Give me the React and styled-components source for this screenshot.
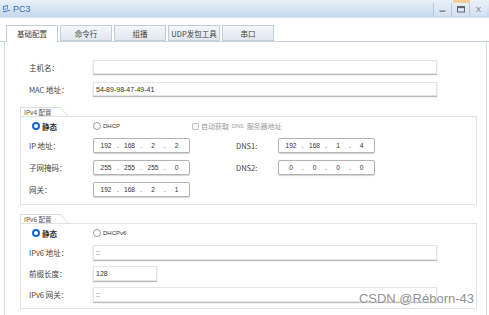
import React from "react"
import styled, { createGlobalStyle } from "styled-components"

const GlobalStyle = createGlobalStyle`
  html, body {
    margin: 0;
    padding: 0;
    background: #fff;
  }
  body {
    font-family: "Noto Sans CJK SC", "Liberation Sans", sans-serif;
  }
`

const Window = styled.div`
  position: relative;
  width: 489px;
  height: 315px;
  overflow: hidden;
  background: #fff;
  color: #333;
  display: flex;
  flex-direction: column;
`

const TitleBar = styled.div`
  height: 17px;
  flex: none;
  display: flex;
  align-items: center;
  padding-left: 2px;
  background: linear-gradient(#eaf1f9, #c4d8ec);
  border-bottom: 1px solid #d6e2ee;
  position: relative;
`

const TitleText = styled.span`
  margin-left: 2px;
  font-family: "Liberation Sans", sans-serif;
  font-size: 9px;
  color: #3b6db5;
`

const Controls = styled.div`
  margin-left: auto;
  margin-right: 2px;
  display: flex;
  height: 13px;
  align-self: flex-end;
  margin-bottom: 1px;
`

const CtrlButton = styled.div`
  width: 17px;
  height: 13px;
  display: flex;
  align-items: center;
  justify-content: center;
  border-left: 1px solid #b7c8da;
  background: linear-gradient(#e6eef7, #d2e1f0);
  font-family: "Liberation Sans", sans-serif;
  font-size: 8px;
  color: #777;
`

const HelpTag = styled.div`
  position: absolute;
  top: 0;
  left: 453px;
  width: 17px;
  height: 3px;
  background: #f6cf98;
`

const TabStrip = styled.div`
  flex: none;
  margin-top: 7px;
  height: 16px;
  display: flex;
  align-items: flex-end;
  gap: 2px;
  padding-left: 6px;
  border-bottom: 1px solid #cad3dc;
`

const Tab = styled.div`
  box-sizing: border-box;
  width: 52px;
  height: ${p => (p.$active ? "17px" : "16px")};
  margin-bottom: ${p => (p.$active ? "-1px" : "0")};
  display: flex;
  align-items: center;
  justify-content: center;
  border: 1px solid #c3cdd8;
  border-bottom: ${p => (p.$active ? "none" : "1px solid #c3cdd8")};
  background: ${p => (p.$active ? "#fff" : "linear-gradient(#f4f7fa, #e0e7ee)")};
  font-size: 7.5px;
  color: #444;
  padding-bottom: ${p => (p.$active ? "1px" : "0")};
`

const Body = styled.div`
  flex: 1;
  margin: 0 2px 0 4px;
  border-left: 1px solid #d6dce2;
  border-right: 1px solid #d6dce2;
  padding: 18px 9px 0 15px;
  display: flex;
  flex-direction: column;
`

const FieldRow = styled.div`
  display: flex;
  align-items: center;
  padding-left: ${p => p.$indent || 0}px;
  height: ${p => p.$h || 14}px;
  margin-top: ${p => p.$mt || 0}px;
`

const Label = styled.span`
  width: ${p => p.$w || 64}px;
  flex: none;
  font-size: 7.5px;
  color: #444;
  white-space: nowrap;
`

const TextBox = styled.div`
  box-sizing: border-box;
  width: ${p => p.$w}px;
  height: ${p => p.$h || 14}px;
  border: 1px solid #e4e4e4;
  box-shadow: 0 1px 1px #bcbcbc;
  background: #fff;
  padding-left: 2px;
  display: flex;
  align-items: center;
  font-family: "Liberation Sans", sans-serif;
  font-size: 7px;
  color: #333;
`

const IpBox = styled.div`
  box-sizing: border-box;
  width: 97px;
  height: 15px;
  border: 1px solid #b4b4b4;
  border-radius: 2px;
  box-shadow: 0 1px 1px rgba(0, 0, 0, 0.18);
  background: #fff;
  padding-left: 3px;
  display: flex;
  align-items: center;
  font-family: "Liberation Sans", sans-serif;
  font-size: 6.6px;
  color: #333;
`

const Octet = styled.span`
  width: 18px;
  text-align: center;
`

const Dot = styled.span`
  width: 5.5px;
  text-align: center;
`

const Group = styled.div`
  margin-top: ${p => p.$mt}px;
  display: flex;
  flex-direction: column;
  align-items: flex-start;
`

const Legend = styled.div`
  position: relative;
  box-sizing: border-box;
  width: 40px;
  height: 9px;
  padding-left: 3px;
  border-top: 1px solid #dcdcdc;
  border-left: 1px solid #dcdcdc;
  font-size: 6.5px;
  line-height: 8px;
  color: #555;
  white-space: nowrap;
  &::after {
    content: "";
    position: absolute;
    top: -1px;
    right: -8px;
    width: 8px;
    height: 9px;
    background: linear-gradient(
      to top right,
      transparent calc(50% - 0.6px),
      #d6d6d6 50%,
      transparent calc(50% + 0.6px)
    );
  }
`

const GroupBox = styled.div`
  box-sizing: border-box;
  width: 457px;
  border: 1px solid #e2e2e2;
  background: #fff;
  padding: ${p => p.$pad};
`

const V4Grid = styled.div`
  display: grid;
  grid-template-columns: 64px 97px 46px 42px 97px;
  grid-template-rows: 10px 15px 15px 15px;
  row-gap: 7px;
  align-items: center;
`

const V6Stack = styled.div`
  display: flex;
  flex-direction: column;
  gap: 6px;
`

const RadioItem = styled.label`
  display: flex;
  align-items: center;
  gap: 2px;
  padding-left: ${p => p.$pl || 0}px;
  font-size: ${p => (p.$latin ? "6px" : "7.5px")};
  font-family: ${p =>
    p.$latin ? '"Liberation Sans", sans-serif' : '"Noto Sans CJK SC", sans-serif'};
  color: #333;
  font-weight: ${p => (p.$bold ? 600 : 400)};
`

const RadioDot = styled.span`
  box-sizing: border-box;
  width: 8px;
  height: 8px;
  border-radius: 50%;
  background: #fff;
  border: ${p => (p.$checked ? "2.5px solid #1466d6" : "1px solid #9c9c9c")};
`

const CheckItem = styled.label`
  grid-column: 3 / 6;
  display: flex;
  align-items: center;
  gap: 2px;
  padding-left: 2px;
  font-size: 7px;
  color: #9a9a9a;
  white-space: nowrap;
`

const CheckBox = styled.span`
  box-sizing: border-box;
  width: 7px;
  height: 7px;
  border: 1px solid #c2c2c2;
  border-radius: 1px;
  background: #fafafa;
`

const Small = styled.span`
  font-family: "Liberation Sans", sans-serif;
  font-size: 5.5px;
  margin: 0 1px;
`

const Footer = styled.div`
  margin-top: 6px;
  width: 457px;
  display: flex;
  justify-content: flex-end;
`

const FooterButton = styled.div`
  box-sizing: border-box;
  width: 49px;
  height: 16px;
  border: 1px solid #c8c8c8;
  border-radius: 2px;
  background: linear-gradient(#fdfdfd, #ececec);
`

const Watermark = styled.div`
  position: absolute;
  right: 15px;
  top: 291px;
  font-family: "Liberation Sans", sans-serif;
  font-size: 13px;
  color: #929292;
  text-shadow: 0 0 1px #fff, 0 0 2px #fff;
`

function PcIcon() {
  return (
    <svg width="9" height="9" viewBox="0 0 9 9">
      <path d="M1 2 L6 1 L6 5 L1 6 Z" fill="#4a86c8" />
      <path d="M2 2.8 L5.2 2.2 L5.2 4.4 L2 5 Z" fill="#cfe2f5" />
      <path d="M0.5 7.5 L7.5 6 L8.5 6.6 L1.5 8.2 Z" fill="#2f6db3" />
    </svg>
  )
}

function Ip({ value }) {
  const parts = value.split(".")
  return (
    <IpBox>
      {parts.map((p, i) => (
        <React.Fragment key={i}>
          {i > 0 && <Dot>.</Dot>}
          <Octet>{p}</Octet>
        </React.Fragment>
      ))}
    </IpBox>
  )
}

function Radio({ checked, children, ...rest }) {
  return (
    <RadioItem {...rest}>
      <RadioDot $checked={checked} />
      {children}
    </RadioItem>
  )
}

export default function App() {
  return (
    <Window>
      <GlobalStyle />
      <TitleBar>
        <PcIcon />
        <TitleText>PC3</TitleText>
        <HelpTag />
        <Controls>
          <CtrlButton>
            <svg width="7" height="7" viewBox="0 0 7 7">
              <rect x="0.5" y="4.5" width="6" height="1.2" fill="#666" />
            </svg>
          </CtrlButton>
          <CtrlButton>
            <svg width="8" height="7" viewBox="0 0 8 7">
              <rect x="0.5" y="0.5" width="7" height="5.5" fill="none" stroke="#666" strokeWidth="1" />
              <rect x="0.5" y="0.5" width="7" height="1.6" fill="#666" />
            </svg>
          </CtrlButton>
          <CtrlButton>X</CtrlButton>
        </Controls>
      </TitleBar>

      <TabStrip>
        <Tab $active>基础配置</Tab>
        <Tab>命令行</Tab>
        <Tab>组播</Tab>
        <Tab>UDP发包工具</Tab>
        <Tab>串口</Tab>
      </TabStrip>

      <Body>
        <FieldRow $indent={9}>
          <Label>主机名：</Label>
          <TextBox $w={344} />
        </FieldRow>
        <FieldRow $indent={9} $mt={8}>
          <Label>MAC 地址：</Label>
          <TextBox $w={344}>54-89-98-47-49-41</TextBox>
        </FieldRow>

        <Group $mt={11}>
          <Legend>IPv4 配置</Legend>
          <GroupBox $pad="4px 0 7px 8px">
            <V4Grid>
              <Radio checked $pl={3} $bold>静态</Radio>
              <Radio $latin>DHCP</Radio>
              <CheckItem>
                <CheckBox />
                自动获取<Small>DNS</Small>服务器地址
              </CheckItem>

              <Label>IP 地址：</Label>
              <Ip value="192.168.2.2" />
              <span />
              <Label $w={42}>DNS1:</Label>
              <Ip value="192.168.1.4" />

              <Label>子网掩码：</Label>
              <Ip value="255.255.255.0" />
              <span />
              <Label $w={42}>DNS2:</Label>
              <Ip value="0.0.0.0" />

              <Label>网关：</Label>
              <Ip value="192.168.2.1" />
            </V4Grid>
          </GroupBox>
        </Group>

        <Group $mt={9}>
          <Legend>IPv6 配置</Legend>
          <GroupBox $pad="4px 0 6px 8px">
            <V6Stack>
              <FieldRow $h={10}>
                <Label>
                  <Radio checked $pl={3} $bold>静态</Radio>
                </Label>
                <Radio $latin>DHCPv6</Radio>
              </FieldRow>
              <FieldRow $mt={1} $h={15}>
                <Label>IPv6 地址：</Label>
                <TextBox $w={344} $h={15}>::</TextBox>
              </FieldRow>
              <FieldRow $h={15}>
                <Label>前缀长度：</Label>
                <TextBox $w={64} $h={15}>128</TextBox>
              </FieldRow>
              <FieldRow $h={15}>
                <Label>IPv6 网关：</Label>
                <TextBox $w={344} $h={15}>::</TextBox>
              </FieldRow>
            </V6Stack>
          </GroupBox>
        </Group>

        <Footer>
          <FooterButton />
        </Footer>
      </Body>

      <Watermark>CSDN @Réborn-43</Watermark>
    </Window>
  )
}
